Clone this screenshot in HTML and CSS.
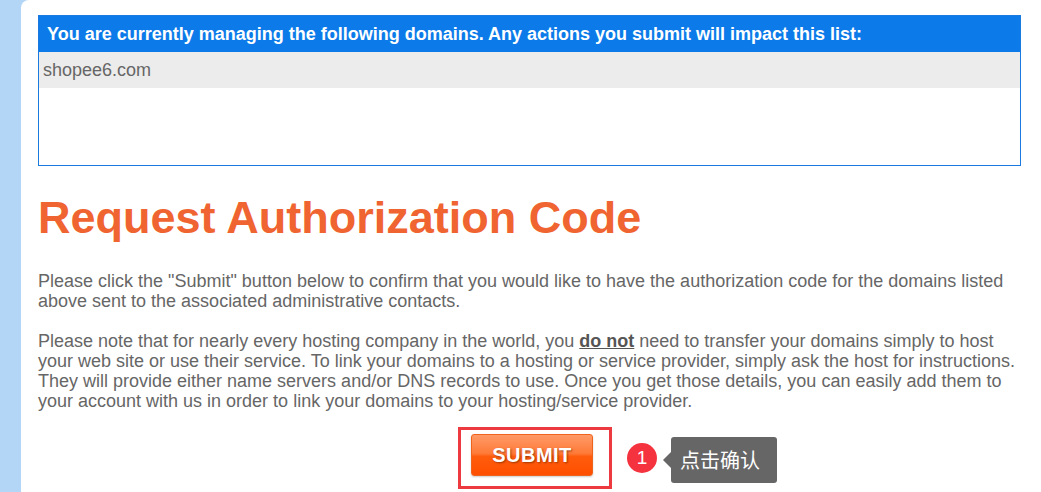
FILE: index.html
```html
<!DOCTYPE html>
<html lang="en">
<head>
    <meta charset="UTF-8">
    <title>Request Authorization Code</title>
    <link rel="stylesheet" href="styles.css">
</head>
<body>
<div class="page">
    <div class="domains">
        <div class="domains-head">You are currently managing the following domains. Any actions you submit will impact this list:</div>
        <ul class="domain-list">
            <li>shopee6.com</li>
        </ul>
    </div>

    <h1 class="title">Request Authorization Code</h1>

    <p class="text">Please click the "Submit" button below to confirm that you would like to have the authorization code for the domains listed above sent to the associated administrative contacts.</p>

    <p class="text">Please note that for nearly every hosting company in the world, you <b class="strong">do not</b> need to transfer your domains simply to host your web site or use their service. To link your domains to a hosting or service provider, simply ask the host for instructions. They will provide either name servers and/or DNS records to use. Once you get those details, you can easily add them to your account with us in order to link your domains to your hosting/service provider.</p>

    <div class="actions">
        <div class="mark">
            <button class="submit" type="button">SUBMIT</button>
        </div>
        <span class="step">1</span>
        <span class="tip">点击确认</span>
    </div>
</div>
</body>
</html>
```

FILE: styles.css
```css
* {
    padding: 0;
    margin: 0;
    list-style: none;
    box-sizing: border-box;
}

body {
    background: #b3d6f7;
    font-family: "Liberation Sans", Arial, sans-serif;
    color: #666;
    height: 492px;
    overflow: hidden;
}

.page {
    margin-left: 21px;
    height: 100%;
    background: #fff;
    border-top-left-radius: 8px;
    padding: 15px 20px 0 17px;
}

/* domain list box */
.domains {
    border: 1px solid #1a7ae0;
    height: 151px;
}

.domains-head {
    background: #0c7be9;
    color: #fff;
    font-weight: bold;
    font-size: 18px;
    height: 36px;
    line-height: 36px;
    padding-left: 8px;
}

.domain-list li {
    background: #ececec;
    height: 36px;
    line-height: 36px;
    padding-left: 4px;
    font-size: 18px;
    color: #666;
}

.title {
    color: #ef6430;
    font-size: 45px;
    line-height: 50px;
    font-weight: bold;
    margin-top: 27px;
    margin-bottom: 28px;
}

.text {
    font-size: 18px;
    line-height: 20px;
    margin-bottom: 20px;
}

.strong {
    color: #555;
    text-decoration: underline;
}

/* submit row */
.actions {
    display: flex;
    align-items: center;
    padding-left: 420px;
    margin-top: -4px;
}

.mark {
    width: 154px;
    height: 62px;
    border: 3px solid #ec3a40;
    padding: 4px 0 0 10px;
}

.submit {
    width: 122px;
    height: 42px;
    border: 1px solid #f0631c;
    border-radius: 3px;
    background: linear-gradient(#ff9a68, #ff7a38 46%, #ff5c0c 54%, #ff4f00);
    color: #fff;
    font-family: "Liberation Sans", Arial, sans-serif;
    font-weight: bold;
    font-size: 20px;
    letter-spacing: 0.5px;
    text-shadow: 1px 1px 2px rgba(90, 30, 0, 0.6);
    box-shadow: 0 1px 2px rgba(0, 0, 0, 0.2);
    cursor: pointer;
}

.step {
    width: 30px;
    height: 30px;
    border-radius: 50%;
    background: #f5333f;
    color: #fff;
    font-size: 19px;
    line-height: 30px;
    text-align: center;
    margin-left: 15px;
}

.tip {
    position: relative;
    margin-left: 14px;
    margin-top: 4px;
    height: 46px;
    line-height: 46px;
    padding: 0 17px 0 9px;
    background: #666;
    color: #fff;
    border-radius: 3px;
    font-family: "Noto Sans CJK SC", sans-serif;
    font-size: 20px;
}

.tip::before {
    content: "";
    position: absolute;
    left: -8px;
    top: 50%;
    margin-top: -8px;
    border-style: solid;
    border-width: 8px 8px 8px 0;
    border-color: transparent #666 transparent transparent;
}
```
